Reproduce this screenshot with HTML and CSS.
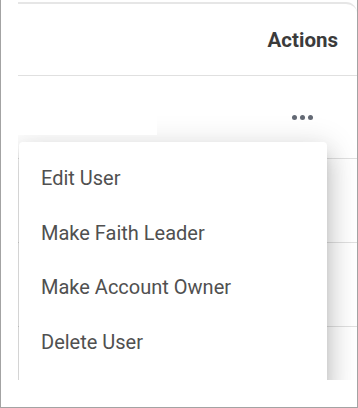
FILE: index.html
```html
<!DOCTYPE html>
<html lang="en">
<head>
    <meta charset="UTF-8" />
    <meta name="viewport" content="width=device-width, initial-scale=1.0" />
    <title>Users - Actions</title>
    <link rel="stylesheet" href="styles.css">
</head>
<body>
    <div class="frame">
        <div class="card">
            <div class="table-head">
                <span class="col-title">Actions</span>
            </div>
            <div class="table-row row-open">
                <div class="cell-name"></div>
                <button class="more-btn" aria-label="More actions">
                    <span class="dot"></span><span class="dot"></span><span class="dot"></span>
                </button>
            </div>
            <div class="table-row"></div>
            <div class="table-row"></div>
            <div class="table-row"></div>

            <ul class="menu">
                <li>Edit User</li>
                <li>Make Faith Leader</li>
                <li>Make Account Owner</li>
                <li>Delete User</li>
            </ul>
        </div>
    </div>
</body>
</html>
```

FILE: styles.css
```css
body {
    margin: 0;
    background: #fff;
    font-family: Roboto, 'Liberation Sans', sans-serif;
}
.frame {
    box-sizing: border-box;
    width: 358px;
    height: 408px;
    border: 1px solid #a3a3a3;
    border-top: none;
    background: #fff;
    overflow: hidden;
}
.card {
    position: relative;
    box-sizing: border-box;
    width: 339px;
    height: 378px;
    margin: 2px 0 0 17px;
    border-top: 2px solid #e6e6e6;
    border-top-right-radius: 11px;
    overflow: hidden;
    background: #fff;
}
.table-head {
    box-sizing: border-box;
    height: 72px;
    border-bottom: 1px solid #e0e0e0;
    display: flex;
    align-items: center;
    justify-content: flex-end;
    padding-right: 19px;
}
.col-title {
    font-size: 20.5px;
    font-weight: 700;
    color: #3b3b3b;
}
.table-row {
    box-sizing: border-box;
    height: 84px;
    border-bottom: 1px solid #e0e0e0;
    display: flex;
    align-items: center;
    justify-content: space-between;
}
.table-row.row-open {
    height: 83px;
    align-items: flex-start;
}
.cell-name {
    position: relative;
    z-index: 2;
    width: 139px;
    height: 59px;
    background: #fff;
}
.more-btn {
    display: flex;
    gap: 3px;
    align-self: center;
    margin-right: 44px;
    padding: 0;
    border: none;
    background: none;
    cursor: pointer;
}
.dot {
    width: 5px;
    height: 5px;
    border-radius: 50%;
    background: #646a75;
}
.menu {
    position: absolute;
    z-index: 1;
    top: 138px;
    left: 1px;
    width: 308px;
    margin: 0;
    padding: 9px 0 24px;
    list-style: none;
    background: #fff;
    border-radius: 4px;
    box-shadow: 0 8px 10px -5px rgba(0, 0, 0, 0.2),
                0 16px 24px 2px rgba(0, 0, 0, 0.14),
                0 6px 30px 5px rgba(0, 0, 0, 0.12);
}
.menu li {
    height: 54.5px;
    display: flex;
    align-items: center;
    padding-left: 22px;
    font-size: 20px;
    color: #505050;
    cursor: pointer;
}
```
